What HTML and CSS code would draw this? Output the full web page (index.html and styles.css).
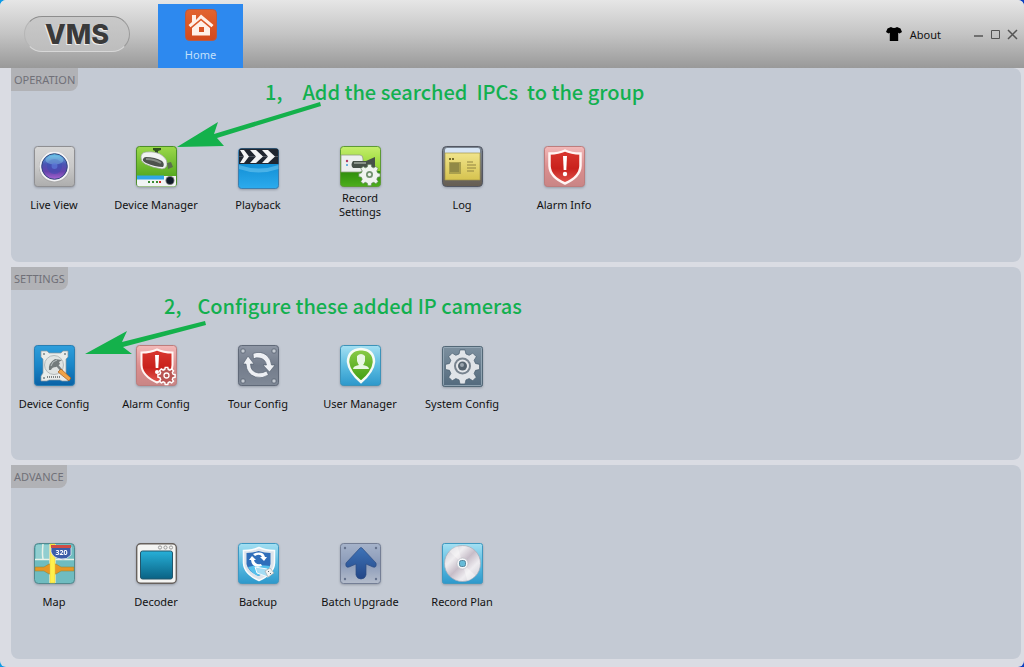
FILE: index.html
```html
<!DOCTYPE html>
<html lang="en">
<head>
<meta charset="utf-8">
<title>VMS</title>
<link rel="stylesheet" href="styles.css">
</head>
<body>
<svg class="defs" width="0" height="0" aria-hidden="true">
  <defs>
    <linearGradient id="silver" x2="0" y2="1"><stop offset="0" stop-color="#d6d6d6"/><stop offset=".5" stop-color="#c9c9c9"/><stop offset="1" stop-color="#adadad"/></linearGradient>
    <linearGradient id="lens" x2="0" y2="1"><stop offset="0" stop-color="#5fc3e8"/><stop offset=".4" stop-color="#4a55b4"/><stop offset=".7" stop-color="#6543ab"/><stop offset="1" stop-color="#a866d2"/></linearGradient>
    <linearGradient id="green" x2="0" y2="1"><stop offset="0" stop-color="#9bd84a"/><stop offset="1" stop-color="#3f9a12"/></linearGradient>
    <linearGradient id="lime" x2="0" y2="1"><stop offset="0" stop-color="#c4ee6c"/><stop offset=".6" stop-color="#8fd32c"/><stop offset=".62" stop-color="#2f8d0c"/><stop offset="1" stop-color="#4cae1b"/></linearGradient>
    <linearGradient id="aqua" x2="0" y2="1"><stop offset="0" stop-color="#2c86c4"/><stop offset=".3" stop-color="#2fa9e6"/><stop offset=".31" stop-color="#0f8bd2"/><stop offset="1" stop-color="#2cabed"/></linearGradient>
    <linearGradient id="logFrame" x2="0" y2="1"><stop offset="0" stop-color="#7c8794"/><stop offset="1" stop-color="#665d51"/></linearGradient>
    <linearGradient id="paper" x2="0" y2="1"><stop offset="0" stop-color="#f0e48b"/><stop offset="1" stop-color="#d6c34f"/></linearGradient>
    <linearGradient id="pink" x2="0" y2="1"><stop offset="0" stop-color="#f2b9b9"/><stop offset=".5" stop-color="#dc8f8f"/><stop offset="1" stop-color="#c98585"/></linearGradient>
    <linearGradient id="red" x2="0" y2="1"><stop offset="0" stop-color="#d9372f"/><stop offset=".55" stop-color="#c9211c"/><stop offset="1" stop-color="#e0574f"/></linearGradient>
    <linearGradient id="blue" x2="0" y2="1"><stop offset="0" stop-color="#2f9fdc"/><stop offset=".5" stop-color="#1a86c8"/><stop offset="1" stop-color="#0a62a6"/></linearGradient>
    <linearGradient id="slate" x2="0" y2="1"><stop offset="0" stop-color="#8f97a5"/><stop offset=".5" stop-color="#737c8b"/><stop offset="1" stop-color="#808997"/></linearGradient>
    <linearGradient id="sky" x2="0" y2="1"><stop offset="0" stop-color="#a5e0f2"/><stop offset=".5" stop-color="#5dbde2"/><stop offset="1" stop-color="#2d98cb"/></linearGradient>
    <linearGradient id="pin" x2="0" y2="1"><stop offset="0" stop-color="#8ccc49"/><stop offset="1" stop-color="#3f9d10"/></linearGradient>
    <linearGradient id="steel" x2="0" y2="1"><stop offset="0" stop-color="#7d909f"/><stop offset="1" stop-color="#536a7d"/></linearGradient>
    <linearGradient id="screen" x2="0" y2="1"><stop offset="0" stop-color="#27b0d8"/><stop offset="1" stop-color="#0a6284"/></linearGradient>
    <linearGradient id="lavender" x2="0" y2="1"><stop offset="0" stop-color="#a6b3ca"/><stop offset=".5" stop-color="#8b9bb9"/><stop offset="1" stop-color="#b4bccb"/></linearGradient>
    <linearGradient id="arrowUp" x2="0" y2="1"><stop offset="0" stop-color="#3f74b8"/><stop offset="1" stop-color="#234687"/></linearGradient>
    <linearGradient id="disc" x2="1" y2="1"><stop offset="0" stop-color="#c6c3cb"/><stop offset=".3" stop-color="#efedf0"/><stop offset=".5" stop-color="#c7bdc8"/><stop offset=".7" stop-color="#eeecf0"/><stop offset="1" stop-color="#c7c8d1"/></linearGradient>
    <linearGradient id="homeTile" x2="0" y2="1"><stop offset="0" stop-color="#e2642f"/><stop offset="1" stop-color="#d2491c"/></linearGradient>
    <path id="shield" d="M21 4.500 Q27 7.500 36.500 7.500 V20 Q36 31 21 37.500 Q6 31 5.500 20 V7.500 Q15 7.500 21 4.500Z"/>
    <path id="cog" d="M-2.200-12h4.400l.8 3.500 2.800 1.200 3.100-1.900 3.100 3.100-1.900 3.100 1.200 2.800 3.500.8v4.400l-3.500.8-1.200 2.800 1.900 3.100-3.100 3.100-3.100-1.900-2.800 1.200-.8 3.500h-4.400l-.8-3.500-2.800-1.200-3.100 1.900-3.100-3.100 1.900-3.100-1.200-2.800-3.500-.8V.6l3.500-.8 1.200-2.800-1.900-3.100 3.100-3.100 3.100 1.900 2.800-1.200z" transform="translate(0 -2)"/>
  </defs>
</svg>

<div class="window">
  <header class="titlebar">
    <h1 class="logo">VMS</h1>
    <nav class="tabs">
      <button class="home" type="button">
        <svg width="32" height="32" viewBox="0 0 32 32" aria-hidden="true">
          <rect x=".5" y=".5" width="31" height="31" rx="4" fill="url(#homeTile)" stroke="#b75b45"/>
          <path d="M7 6h4v5l5-5.500L28.500 16l-2 2.200L16 9.500 5.500 18.200l-2-2.200L7 13z" fill="#fff0e7"/>
          <path d="M7 19 16 11.500 25 19v7.500h-6V18h-5v8.500H7z" fill="#fff0e7"/>
          <path d="M14 23h5v3.500h-5z" fill="#fff0e7"/>
        </svg>
        <span>Home</span>
      </button>
    </nav>
    <div class="tools">
      <button class="about" type="button">
        <svg width="16" height="16" viewBox="0 0 16 16" aria-hidden="true"><path d="M5 1q3 2 6 0l3.500 1.500L16 6l-2.500 1.500-1.300-.8V15H3.800V6.700l-1.300.8L0 6l1.500-3.500z"/></svg>
        <span>About</span>
      </button>
      <div class="controls">
        <button type="button" aria-label="Minimize"><svg width="11" height="11" viewBox="0 0 11 11"><path d="M1 7h9" stroke-width="1.500"/></svg></button>
        <button type="button" aria-label="Maximize"><svg width="11" height="11" viewBox="0 0 11 11"><path d="M1.500 1.500h8v8h-8z"/></svg></button>
        <button type="button" aria-label="Close"><svg width="11" height="11" viewBox="0 0 11 11"><path d="m1 1 9 9M10 1l-9 9" stroke-width="1.500"/></svg></button>
      </div>
    </div>
  </header>

  <main class="panels">
    <section class="panel">
      <h2 class="panel-title">OPERATION</h2>
      <div class="items">
        <button class="item" type="button">
          <svg class="icon" viewBox="-1 0 42 42" aria-hidden="true">
            <rect x=".5" y=".5" width="40" height="40" rx="3" fill="url(#silver)" stroke="#8f8f92"/>
            <circle cx="20.500" cy="21" r="15.500" fill="#aaa"/><circle cx="20.500" cy="20.500" r="15" fill="#f3f3f5"/>
            <circle cx="20.500" cy="20.500" r="12.800" fill="url(#lens)" stroke="#33477e"/>
            <circle cx="20.500" cy="20.500" r="7.500" fill="#3d4fb5" opacity=".55"/>
            <ellipse cx="20.500" cy="14" rx="9" ry="4.500" fill="#9be0f3" opacity=".35"/>
            <circle cx="20.500" cy="20" r="3" fill="#5c79d8" opacity=".7"/>
          </svg>
          <span class="label">Live View</span>
        </button>
        <button class="item" type="button">
          <svg class="icon" viewBox="-1 0 42 42" aria-hidden="true">
            <rect x=".5" y=".5" width="40" height="40" rx="3" fill="url(#green)" stroke="#4c8f27"/>
            <path d="M17 2h8v2l-3 1v3h-3V5l-2-1z" fill="#31501f"/>
            <path d="M10 6q11-1 17 4 5 4 4 9-1 4-5 4-9-1-17-5-5-3-4-8 1-4 5-4z" fill="#f1f3f1" stroke="#99a396" stroke-width=".7"/>
            <path d="M10 11q9 0 16 4 3 3 1 6-8 0-17-4-4-2-3-4 1-2 3-2z" fill="#4d524d"/>
            <path d="M10 13q8 0 15 4" stroke="#858b84" stroke-width="2" fill="none"/>
            <path d="m31 17 4-1 2 5-5 2z" fill="#5b6f4d"/>
            <path d="M1 30h39v8q0 2.500-2 2.500H3q-2 0-2-2.500z" fill="#f1f4f4"/>
            <path d="M1 29.500h27v4H1z" fill="#31a7e6"/>
            <path d="M12 35h2v2h-2zm4 0h2v2h-2zm4 0h2v2h-2z" fill="#3a8b32"/><path d="M23 35h2v2h-2z" fill="#d02a22"/>
            <circle cx="34" cy="34.500" r="4.500" fill="#777"/><circle cx="34" cy="34.500" r="3.600" fill="#111b28"/>
          </svg>
          <span class="label">Device Manager</span>
        </button>
        <button class="item" type="button">
          <svg class="icon" viewBox="-1 0 42 42" aria-hidden="true">
            <rect x=".5" y="2.500" width="40" height="40" rx="3" fill="url(#aqua)" stroke="#3e7fae"/>
            <path d="M1 18V5q0-2.500 2.500-2.500H38q2.500 0 2.500 2.500v13z" fill="#202630"/>
            <path d="M1 10.500h39.500" stroke="#4b515b"/>
            <path d="M2 4h4l5 6.500L6 17H2l4-6.500zM12 4h6l7 6.500-7 6.500h-6l6-6.500zM24 4h6l7 6.500-7 6.500h-6l6-6.500z" fill="#f4f5f6"/>
            <path d="M1 19q20 7 39.500 0v4q-20 7-39.500 0z" fill="#79cdf4" opacity=".5"/>
          </svg>
          <span class="label">Playback</span>
        </button>
        <button class="item" type="button">
          <svg class="icon" viewBox="-1 0 42 42" aria-hidden="true">
            <rect x=".5" y=".5" width="40" height="40" rx="3" fill="url(#lime)" stroke="#5d9a35"/>
            <path d="M1 9h19q3 0 3 4v9q0 4-3 4H1z" fill="#ecefee" stroke="#8fa07f" stroke-width=".8"/>
            <path d="M13 15h13l9-4v12l-9-1H13q-3-3 0-7z" fill="#465048"/><path d="M14 17h12" stroke="#89928a" stroke-width="2"/>
            <circle cx="7" cy="15" r="1.200" fill="#b33b62"/><circle cx="7" cy="19" r="1" fill="#3e9bd6"/>
            <use href="#cog" transform="translate(29.500 28.500) scale(.72)" fill="#f0f4ef" stroke="#6a8865"/>
            <circle cx="29.500" cy="28.500" r="3.500" fill="#72916f"/><circle cx="29.500" cy="28.500" r="1.700" fill="#eef3ec"/>
          </svg>
          <span class="label">Record<br>Settings</span>
        </button>
        <button class="item" type="button">
          <svg class="icon" viewBox="-1 0 42 42" aria-hidden="true">
            <rect x=".5" y=".5" width="40" height="40" rx="4" fill="url(#logFrame)" stroke="#535763"/>
            <path d="M3 7V4q0-2 2-2h31q2 0 2 2v3z" fill="#d6e4f4"/>
            <path d="M3 7h35v27H3z" fill="url(#paper)" stroke="#a49747" stroke-width=".7"/>
            <path d="M7 12h2v2H7zm3 0h2v2h-2z" fill="#766b2c"/>
            <path d="M7 16h12v12H7z" fill="#aaa04d"/><path d="M8 17h9v9H8z" fill="#918a46"/>
            <path d="M25 16h6m-6 3h9m-9 3h9m-9 3h7" stroke="#918443" stroke-width="1"/>
          </svg>
          <span class="label">Log</span>
        </button>
        <button class="item" type="button">
          <svg class="icon" viewBox="-1 0 42 42" aria-hidden="true">
            <rect x=".5" y=".5" width="40" height="40" rx="3" fill="url(#pink)" stroke="#bd7d7d"/>
            <use href="#shield" fill="url(#red)" stroke="#fff5f3" stroke-width="2.500"/>
            <path d="M19 10h4l-.7 14h-2.600z" fill="#fff"/><circle cx="21" cy="28" r="2.200" fill="#fff"/>
          </svg>
          <span class="label">Alarm Info</span>
        </button>
      </div>
      <p class="note note-add"><span>1,</span><span>Add the searched&nbsp; IPCs&nbsp; to the group</span></p>
      <svg class="arrow arrow-add" width="148" height="48" viewBox="0 0 148 48" aria-hidden="true"><path d="M1 46 42 21l-4 12L144 1l1 4L41 37l7 8z"/></svg>
    </section>

    <section class="panel">
      <h2 class="panel-title">SETTINGS</h2>
      <div class="items">
        <button class="item" type="button">
          <svg class="icon" viewBox="-1 0 42 42" aria-hidden="true">
            <rect x=".5" y=".5" width="40" height="40" rx="3" fill="url(#blue)" stroke="#287fb4"/>
            <path d="M7 6h6l2 2h12l2-2h5v6l-2 2v15l2 2v5h-6l-2-1H15l-2 1H7v-5l2-3V14l-2-2z" fill="#e9ecea" stroke="#8c989f" stroke-width=".7"/>
            <circle cx="20" cy="20" r="9.500" fill="#dfe3e2" stroke="#b3b9ba"/>
            <path d="M13 32h13" stroke="#7e8486" stroke-width="2" stroke-dasharray="1 1"/>
            <path d="M9 9h2m19 0h2M9 33h2" stroke="#7b8588" stroke-width="1.500"/>
            <path d="m22 19 6 7" stroke="#777e80" stroke-width="2.500"/>
            <path d="M15 25q-1-7 6-11l7 1-3 2 1 2-4 3q-4 0-5 3z" fill="#737b7c"/><path d="M17 21q1-5 6-6" stroke="#b8bfc0" fill="none"/>
            <path d="m27 24 10 9-2 3-11-9z" fill="#f0a347" stroke="#9e5a1f" stroke-width=".7"/>
          </svg>
          <span class="label">Device Config</span>
        </button>
        <button class="item" type="button">
          <svg class="icon" viewBox="-1 0 42 42" aria-hidden="true">
            <rect x=".5" y=".5" width="40" height="40" rx="3" fill="url(#pink)" stroke="#bd7d7d"/>
            <use href="#shield" fill="url(#red)" stroke="#fff5f3" stroke-width="2"/>
            <path d="M19 10h4l-.7 13h-2.600z" fill="#fff"/><circle cx="21" cy="27" r="2" fill="#fff"/>
            <circle cx="30.500" cy="30.500" r="8" fill="#c3615e"/>
            <use href="#cog" transform="translate(30.500 30.500) scale(.58)" fill="#b95553" stroke="#fff" stroke-width="2.500"/>
            <circle cx="30.500" cy="30.500" r="2.500" fill="#b95553" stroke="#fff" stroke-width="1.300"/>
          </svg>
          <span class="label">Alarm Config</span>
        </button>
        <button class="item" type="button">
          <svg class="icon" viewBox="-1 0 42 42" aria-hidden="true">
            <rect x=".5" y=".5" width="40" height="40" rx="3" fill="url(#slate)" stroke="#606978"/>
            <g fill="#c5cbd3" stroke="#565f6e" stroke-width=".8"><rect x="3" y="4" width="4" height="4" rx="1"/><rect x="34" y="4" width="4" height="4" rx="1"/><rect x="3" y="34" width="4" height="4" rx="1"/><rect x="34" y="34" width="4" height="4" rx="1"/></g>
            <g fill="#eef0f4" stroke="#4f5a69" stroke-width=".6">
              <path d="M5 19 10 11l6 8h-3.500q0 8 8 9 5 0 8-2l2 4q-6 4-13 2-9-3-9.500-13z"/>
              <path d="M15 8.500q8-3 14 2 4 4 4.500 9.500H37l-5.500 7-6.500-7h3.500q-1-6-7-7-4-1-6 1z"/>
            </g>
          </svg>
          <span class="label">Tour Config</span>
        </button>
        <button class="item" type="button">
          <svg class="icon" viewBox="-1 0 42 42" aria-hidden="true">
            <rect x=".5" y=".5" width="40" height="40" rx="3" fill="url(#sky)" stroke="#3d93b9"/>
            <path d="M21 37Q9 27 8 17 8 5 21 4q13 1 13 13-1 10-13 20z" fill="url(#pin)" stroke="#f7fbf5" stroke-width="2.500"/>
            <path d="M17 11q4-4 8 0v5q-1 3-2 4 6 1 6 4H13q0-3 6-4-1-1-2-4z" fill="#e9f6e3"/>
          </svg>
          <span class="label">User Manager</span>
        </button>
        <button class="item" type="button">
          <svg class="icon" viewBox="-1 0 42 42" aria-hidden="true">
            <rect x=".5" y="1.500" width="40" height="40" rx="2" fill="url(#steel)" stroke="#536877"/>
            <rect x="1.500" y="2.500" width="38" height="38" rx="1" fill="none" stroke="#9cafbd" stroke-width=".8"/>
            <use href="#cog" transform="translate(20.500 21) scale(1.150)" fill="#e0e4e8" stroke="#465b6c" stroke-width=".6"/>
            <circle cx="20.500" cy="21" r="8.500" fill="#78848f"/><circle cx="20.500" cy="21" r="6.500" fill="#e5e8eb"/><circle cx="20.500" cy="21" r="4.500" fill="#55636e"/><circle cx="20" cy="20" r="2" fill="#9aa5ad"/>
          </svg>
          <span class="label">System Config</span>
        </button>
      </div>
      <p class="note note-config"><span>2,</span><span>Configure these added IP cameras</span></p>
      <svg class="arrow arrow-config" width="124" height="36" viewBox="0 0 124 36" aria-hidden="true"><path d="m1 34 42-23-5 11L121 1l1 4-83 22 9 7z"/></svg>
    </section>

    <section class="panel">
      <h2 class="panel-title">ADVANCE</h2>
      <div class="items">
        <button class="item" type="button">
          <svg class="icon" viewBox="-1 0 42 42" aria-hidden="true">
            <rect x=".5" y=".5" width="40" height="40" rx="4" fill="#6fbcc0" stroke="#52898e"/>
            <path d="M2 2h14v14H2z" fill="#91ced0"/>
            <path d="M1 16.500h39M9 1q-1 10 0 15M16 1v39M21 1v39" stroke="#e8f1e8" stroke-width="1.500" fill="none"/>
            <path d="M1 24h9l5-3h7l5 3h13v4H27l-5 3h-7l-5-3H1z" fill="#e89624" stroke="#8a8b42" stroke-width=".6"/>
            <path d="M16 1h5v39h-5z" fill="#fff04c" stroke="#e0c734" stroke-width=".5"/>
            <path d="M17 4h20v8q-4 5-10 4-8-1-10-7z" fill="#3b5da8" stroke="#edf0f4" stroke-width=".8"/>
            <path d="M17 2h20v3H17z" fill="#cf4c45"/>
            <text x="27.500" y="12" text-anchor="middle" class="route">320</text>
          </svg>
          <span class="label">Map</span>
        </button>
        <button class="item" type="button">
          <svg class="icon" viewBox="-1 0 42 42" aria-hidden="true">
            <rect x=".7" y=".7" width="39.600" height="39.600" rx="4" fill="#f4f4f2" stroke="#67615d" stroke-width="1.400"/>
            <g fill="none" stroke="#999" stroke-width="1"><circle cx="24" cy="4.500" r="1.600"/><circle cx="29.500" cy="4.500" r="1.600"/><circle cx="35" cy="4.500" r="1.600"/></g>
            <rect x="4.500" y="8" width="32" height="28" rx="2" fill="url(#screen)" stroke="#24566b"/>
          </svg>
          <span class="label">Decoder</span>
        </button>
        <button class="item" type="button">
          <svg class="icon" viewBox="-1 0 42 42" aria-hidden="true">
            <rect x=".5" y=".5" width="40" height="40" rx="3" fill="url(#sky)" stroke="#3d98c2"/>
            <use href="#shield" fill="#dce4eb" stroke="#fafcfd" stroke-width="1.500"/>
            <path d="M20.500 8q6 2 12 2v11q-1 7-12 12-11-5-12-12V10q6 0 12-2z" fill="#2f6eba"/>
            <path d="M10 24q10-3 22-1-1 6-12 10-7-3-10-9z" fill="#55c0ec"/>
            <g fill="#fff"><path d="m11 17 3-4 4 4h-2q1 5 7 4l1 2q-10 3-11-6z"/><path d="M15 11q10-4 12 3h2l-3 4-4-4h2q-2-4-7-1z"/></g>
            <path d="m17 24 12 2 6 4-5 4-11-4z" fill="#a4dcf3" stroke="#f5fbfd"/><path d="m27 28 5-3 4 5-6 4z" fill="#f3f3f1" stroke="#98a1a5" stroke-width=".6"/>
            <path d="m30 29 1-1m1 3 1-1" stroke="#62707a"/>
          </svg>
          <span class="label">Backup</span>
        </button>
        <button class="item" type="button">
          <svg class="icon" viewBox="-1 0 42 42" aria-hidden="true">
            <rect x=".5" y=".5" width="40" height="40" rx="3" fill="url(#lavender)" stroke="#747e95"/>
            <g fill="#65728c"><circle cx="5" cy="5" r="1.200"/><circle cx="36" cy="5" r="1.200"/><circle cx="5" cy="36" r="1.200"/><circle cx="36" cy="36" r="1.200"/></g>
            <path d="M20 5q1-1 2 0l14 15q1 5-3 4l-7-3v11q-1 4-5 4t-5-4V21l-7 3q-4 1-3-4z" fill="url(#arrowUp)" stroke="#2d4c83" stroke-width=".7"/>
          </svg>
          <span class="label">Batch Upgrade</span>
        </button>
        <button class="item" type="button">
          <svg class="icon" viewBox="-1 0 42 42" aria-hidden="true">
            <rect x=".5" y=".5" width="40" height="40" rx="2" fill="url(#sky)" stroke="#3f99c0"/>
            <circle cx="20.500" cy="20.500" r="18" fill="url(#disc)" stroke="#a7abb6" stroke-width=".7"/>
            <path d="m20.500 20.500-13-12q4-5 8-5.500z" fill="#fff" opacity=".35"/><path d="m20.500 20.500 13 12q-4 4-8 5.500z" fill="#fff" opacity=".4"/>
            <circle cx="20.500" cy="20.500" r="5.500" fill="#f5f6f8" stroke="#b5b8c0" stroke-width=".6"/><rect x="17.500" y="17.500" width="6" height="6" rx="2" fill="#65bbd8" stroke="#54859c"/>
          </svg>
          <span class="label">Record Plan</span>
        </button>
      </div>
    </section>
  </main>
</div>
</body>
</html>
```

FILE: styles.css
```css
* {
  box-sizing: border-box;
}

body {
  margin: 0;
  background: linear-gradient(90deg, #0f9be6, #0b3fc0);
  font-family: "Noto Sans", "Open Sans", sans-serif;
  font-size: 11px;
  color: #111;
}

button {
  margin: 0;
  padding: 0;
  border: 0;
  background: none;
  color: inherit;
  font: inherit;
  cursor: pointer;
}

.defs {
  position: absolute;
}

.window {
  display: flex;
  flex-direction: column;
  min-height: 100vh;
  border-radius: 6px;
  background: #dadce3;
  overflow: hidden;
}

.titlebar {
  display: flex;
  align-items: stretch;
  height: 68px;
  padding: 0 6px 0 24px;
  background: linear-gradient(#e6e6e6, #c4c4c4 50%, #999);
}

.logo {
  align-self: center;
  width: 106px;
  margin: 0 28px 0 0;
  padding-top: 1px;
  border: 1px solid;
  border-color: #8d8d8d #9a9a9a #d8d8d8 #b5b5b5;
  border-radius: 18px;
  background: linear-gradient(#c9c9c9, #bdbdbd);
  color: #3a3a3a;
  font-family: Inter, "Liberation Sans", sans-serif;
  font-size: 27px;
  font-weight: 800;
  line-height: 33px;
  text-align: center;
  text-shadow: -1px 1px 0 #eee;
}

.tabs {
  display: flex;
  padding-top: 4px;
}

.home {
  display: flex;
  flex-direction: column;
  align-items: center;
  gap: 5px;
  width: 85px;
  padding-top: 5px;
  background: #2d89ef;
  color: #c3e0fb;
  line-height: 18px;
}

.tools {
  display: flex;
  align-items: center;
  gap: 32px;
  margin-left: auto;
}

.about {
  display: flex;
  align-items: center;
  gap: 8px;
}

.controls {
  display: flex;
  gap: 6px;
}

.controls svg {
  display: block;
  fill: none;
  stroke: #555;
}

.panels {
  display: flex;
  flex: 1;
  flex-direction: column;
  gap: 5px;
  padding: 0 3px 8px 11px;
}

.panel {
  position: relative;
  flex: 1;
  border-radius: 0 8px 8px 8px;
  background: #c4cad4;
}

.panel-title {
  width: fit-content;
  margin: 0;
  padding: 0 3px;
  border-radius: 0 0 8px 0;
  background: #b1b2b6;
  color: #707078;
  font-size: 11px;
  font-weight: 400;
  line-height: 23px;
}

.items {
  display: flex;
  flex-wrap: wrap;
  gap: 16px;
  padding-top: 55px;
}

.item {
  display: flex;
  flex-direction: column;
  align-items: center;
  width: 86px;
}

.icon {
  width: 42px;
  height: 42px;
  overflow: visible;
  filter: drop-shadow(0 1px 1px #6b728088);
}

.label {
  display: flex;
  align-items: center;
  min-height: 34px;
  line-height: 14px;
  white-space: nowrap;
}

.route {
  fill: #fff;
  font-size: 7px;
  font-weight: 700;
}

.note {
  position: absolute;
  display: flex;
  margin: 0;
  color: #12b04f;
  font-family: "Noto Sans CJK SC", "Noto Sans", sans-serif;
  font-size: 20px;
  font-weight: 500;
  line-height: 30px;
  white-space: nowrap;
}

.note-add {
  top: 9px;
  left: 254px;
  gap: 20px;
}

.note-config {
  top: 24px;
  left: 153px;
  gap: 16px;
}

.arrow {
  position: absolute;
  fill: #14b14b;
  pointer-events: none;
}

.arrow-add {
  top: 33px;
  left: 165px;
}

.arrow-config {
  top: 53px;
  left: 73px;
}
```
